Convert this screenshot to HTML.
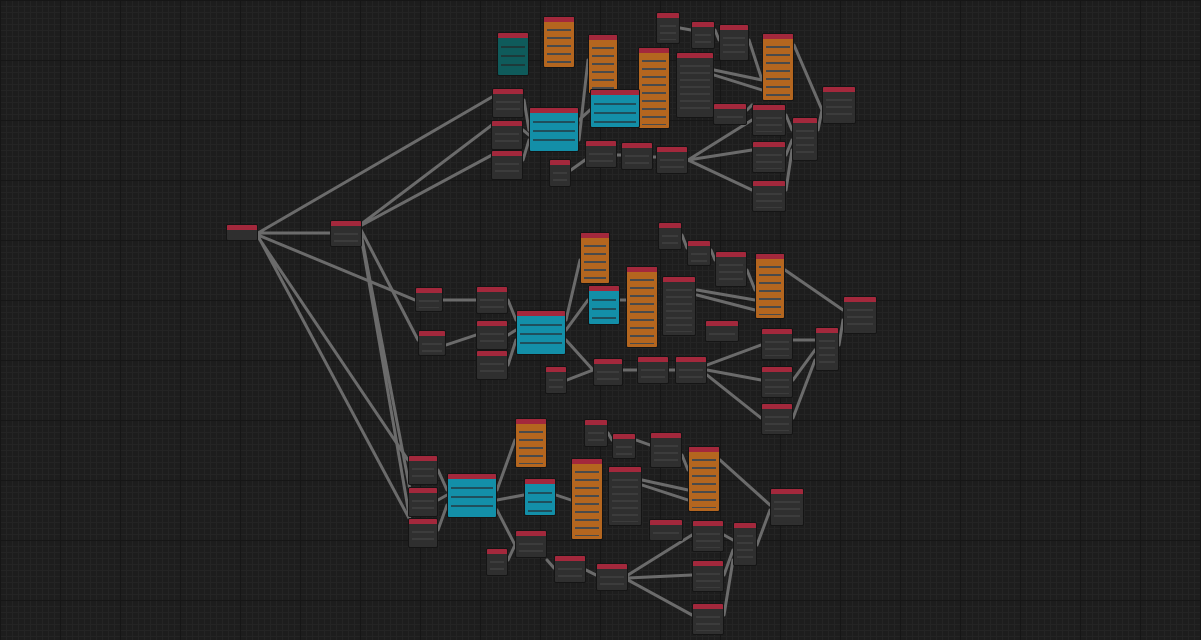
<!DOCTYPE html>
<html><head><meta charset="utf-8"><style>
html,body{margin:0;padding:0}
body{width:1201px;height:640px;overflow:hidden;position:relative;
background-color:#1d1d1d;
background-image:linear-gradient(#161616 1px,transparent 1px),linear-gradient(90deg,#161616 1px,transparent 1px),linear-gradient(#242424 1px,transparent 1px),linear-gradient(90deg,#242424 1px,transparent 1px);
background-size:60px 60px,60px 60px,6px 6px,6px 6px;font-family:"Liberation Sans",sans-serif}
svg{position:absolute;left:0;top:0}
.n{position:absolute;background:#2f2f2f;border:1px solid #151515;border-radius:2px;box-sizing:border-box;overflow:hidden}
.n:before{content:"";position:absolute;left:0;top:0;right:0;height:5px;background:#a3283c}
.n:after{content:"";position:absolute;left:3px;right:3px;top:9px;bottom:3px;background:repeating-linear-gradient(#2f2f2f 0 3px,#3c3c3c 3px 5px,#2f2f2f 5px 7px)}
.o{background:#b4661f}.o:after{background:repeating-linear-gradient(#b4661f 0 3px,#4a4a4a 3px 5px,#b4661f 5px 8px)}
.b{background:#138fa8}.b:after{background:repeating-linear-gradient(#138fa8 0 4px,#1f4f5c 4px 6px,#138fa8 6px 9px)}
.t{background:#0f5b5b}.t:after{background:repeating-linear-gradient(#0f5b5b 0 4px,#1d3a3a 4px 6px,#0f5b5b 6px 9px)}
</style></head><body>
<svg width="1201" height="640" stroke="#6b6b6b" stroke-width="3" fill="none" stroke-linecap="round">
<path d="M258 233L492 97M258 233L330 233M258 235L415 300M258 237L408 460M258 236L410 520"/>
<path d="M360 225L492 125M360 228L418 340M360 228L410 490M360 230L410 520M360 226L492 155"/>
<path d="M524 100L529 130M523 130L529 135M523 160L529 140M571 170L585 160M617 155L621 155M653 157L656 157M579 120L590 110M579 140L588 60M640 105L638 100M688 160L752 120M688 160L752 150M688 160L752 190M714 70L762 80M714 75L762 90M680 28L691 30M715 30L719 40M749 40L762 80M794 45L822 110M818 130L822 110M786 115L792 130M786 155L792 140M786 190L792 150M747 110L752 105"/>
<path d="M443 300L476 300M446 345L476 335M508 300L516 320M508 335L516 330M508 365L516 340M566 320L580 260M566 330L588 300M566 340L593 370M620 300L626 300M623 370L637 370M669 370L675 370M707 365L761 345M707 370L761 380M707 375L761 418M697 290L755 300M697 295L755 310M682 235L687 248M711 250L715 260M747 270L755 290M785 270L843 310M839 345L843 320M793 340L815 340M793 380L815 350M793 418L815 360M567 380L593 370"/>
<path d="M438 470L447 490M438 500L447 495M438 530L447 505M497 490L515 440M497 500L524 495M497 510L515 545M556 495L571 500M508 560L515 545M547 560L554 568M586 570L596 575M628 575L692 535M628 578L692 575M628 580L692 615M642 480L688 490M642 485L688 500M608 433L612 440M636 440L650 445M682 455L688 470M720 460L770 505M757 545L770 510M724 535L733 540M724 575L733 550M724 615L733 560"/>
</svg>
<div class="n t" style="left:497px;top:32px;width:32px;height:44px"></div>
<div class="n o" style="left:543px;top:16px;width:32px;height:52px"></div>
<div class="n o" style="left:588px;top:34px;width:30px;height:60px"></div>
<div class="n o" style="left:638px;top:47px;width:32px;height:82px"></div>
<div class="n" style="left:656px;top:12px;width:24px;height:32px"></div>
<div class="n" style="left:691px;top:21px;width:24px;height:28px"></div>
<div class="n" style="left:719px;top:24px;width:30px;height:37px"></div>
<div class="n" style="left:676px;top:52px;width:38px;height:66px"></div>
<div class="n" style="left:713px;top:103px;width:34px;height:22px"></div>
<div class="n" style="left:752px;top:104px;width:34px;height:32px"></div>
<div class="n o" style="left:762px;top:33px;width:32px;height:68px"></div>
<div class="n" style="left:822px;top:86px;width:34px;height:38px"></div>
<div class="n" style="left:792px;top:117px;width:26px;height:44px"></div>
<div class="n" style="left:752px;top:141px;width:34px;height:32px"></div>
<div class="n" style="left:752px;top:180px;width:34px;height:32px"></div>
<div class="n" style="left:492px;top:88px;width:32px;height:30px"></div>
<div class="n" style="left:491px;top:120px;width:32px;height:30px"></div>
<div class="n" style="left:491px;top:150px;width:32px;height:30px"></div>
<div class="n b" style="left:529px;top:107px;width:50px;height:45px"></div>
<div class="n b" style="left:590px;top:89px;width:50px;height:39px"></div>
<div class="n" style="left:549px;top:159px;width:22px;height:28px"></div>
<div class="n" style="left:585px;top:140px;width:32px;height:28px"></div>
<div class="n" style="left:621px;top:142px;width:32px;height:28px"></div>
<div class="n" style="left:656px;top:146px;width:32px;height:28px"></div>

<div class="n" style="left:226px;top:224px;width:32px;height:17px"></div>
<div class="n" style="left:330px;top:220px;width:32px;height:27px"></div>
<div class="n" style="left:415px;top:287px;width:28px;height:25px"></div>
<div class="n" style="left:418px;top:330px;width:28px;height:26px"></div>
<div class="n" style="left:476px;top:286px;width:32px;height:28px"></div>
<div class="n" style="left:476px;top:320px;width:32px;height:30px"></div>
<div class="n" style="left:476px;top:350px;width:32px;height:30px"></div>
<div class="n b" style="left:516px;top:310px;width:50px;height:45px"></div>
<div class="n o" style="left:580px;top:232px;width:30px;height:52px"></div>
<div class="n b" style="left:588px;top:285px;width:32px;height:40px"></div>
<div class="n o" style="left:626px;top:266px;width:32px;height:82px"></div>
<div class="n" style="left:658px;top:222px;width:24px;height:28px"></div>
<div class="n" style="left:687px;top:240px;width:24px;height:26px"></div>
<div class="n" style="left:715px;top:251px;width:32px;height:36px"></div>
<div class="n" style="left:662px;top:276px;width:34px;height:60px"></div>
<div class="n" style="left:705px;top:320px;width:34px;height:22px"></div>
<div class="n o" style="left:755px;top:253px;width:30px;height:66px"></div>
<div class="n" style="left:843px;top:296px;width:34px;height:38px"></div>
<div class="n" style="left:815px;top:327px;width:24px;height:44px"></div>
<div class="n" style="left:761px;top:328px;width:32px;height:32px"></div>
<div class="n" style="left:761px;top:366px;width:32px;height:32px"></div>
<div class="n" style="left:761px;top:403px;width:32px;height:32px"></div>
<div class="n" style="left:545px;top:366px;width:22px;height:28px"></div>
<div class="n" style="left:593px;top:358px;width:30px;height:28px"></div>
<div class="n" style="left:637px;top:356px;width:32px;height:28px"></div>
<div class="n" style="left:675px;top:356px;width:32px;height:28px"></div>

<div class="n" style="left:408px;top:455px;width:30px;height:30px"></div>
<div class="n" style="left:408px;top:487px;width:30px;height:30px"></div>
<div class="n" style="left:408px;top:518px;width:30px;height:30px"></div>
<div class="n b" style="left:447px;top:473px;width:50px;height:45px"></div>
<div class="n o" style="left:515px;top:418px;width:32px;height:50px"></div>
<div class="n b" style="left:524px;top:478px;width:32px;height:38px"></div>
<div class="n o" style="left:571px;top:458px;width:32px;height:82px"></div>
<div class="n" style="left:584px;top:419px;width:24px;height:28px"></div>
<div class="n" style="left:612px;top:433px;width:24px;height:26px"></div>
<div class="n" style="left:650px;top:432px;width:32px;height:36px"></div>
<div class="n" style="left:608px;top:466px;width:34px;height:60px"></div>
<div class="n" style="left:649px;top:519px;width:34px;height:22px"></div>
<div class="n o" style="left:688px;top:446px;width:32px;height:66px"></div>
<div class="n" style="left:770px;top:488px;width:34px;height:38px"></div>
<div class="n" style="left:733px;top:522px;width:24px;height:44px"></div>
<div class="n" style="left:692px;top:520px;width:32px;height:32px"></div>
<div class="n" style="left:692px;top:560px;width:32px;height:32px"></div>
<div class="n" style="left:692px;top:603px;width:32px;height:32px"></div>
<div class="n" style="left:486px;top:548px;width:22px;height:28px"></div>
<div class="n" style="left:515px;top:530px;width:32px;height:28px"></div>
<div class="n" style="left:554px;top:555px;width:32px;height:28px"></div>
<div class="n" style="left:596px;top:563px;width:32px;height:28px"></div>
</body></html>
